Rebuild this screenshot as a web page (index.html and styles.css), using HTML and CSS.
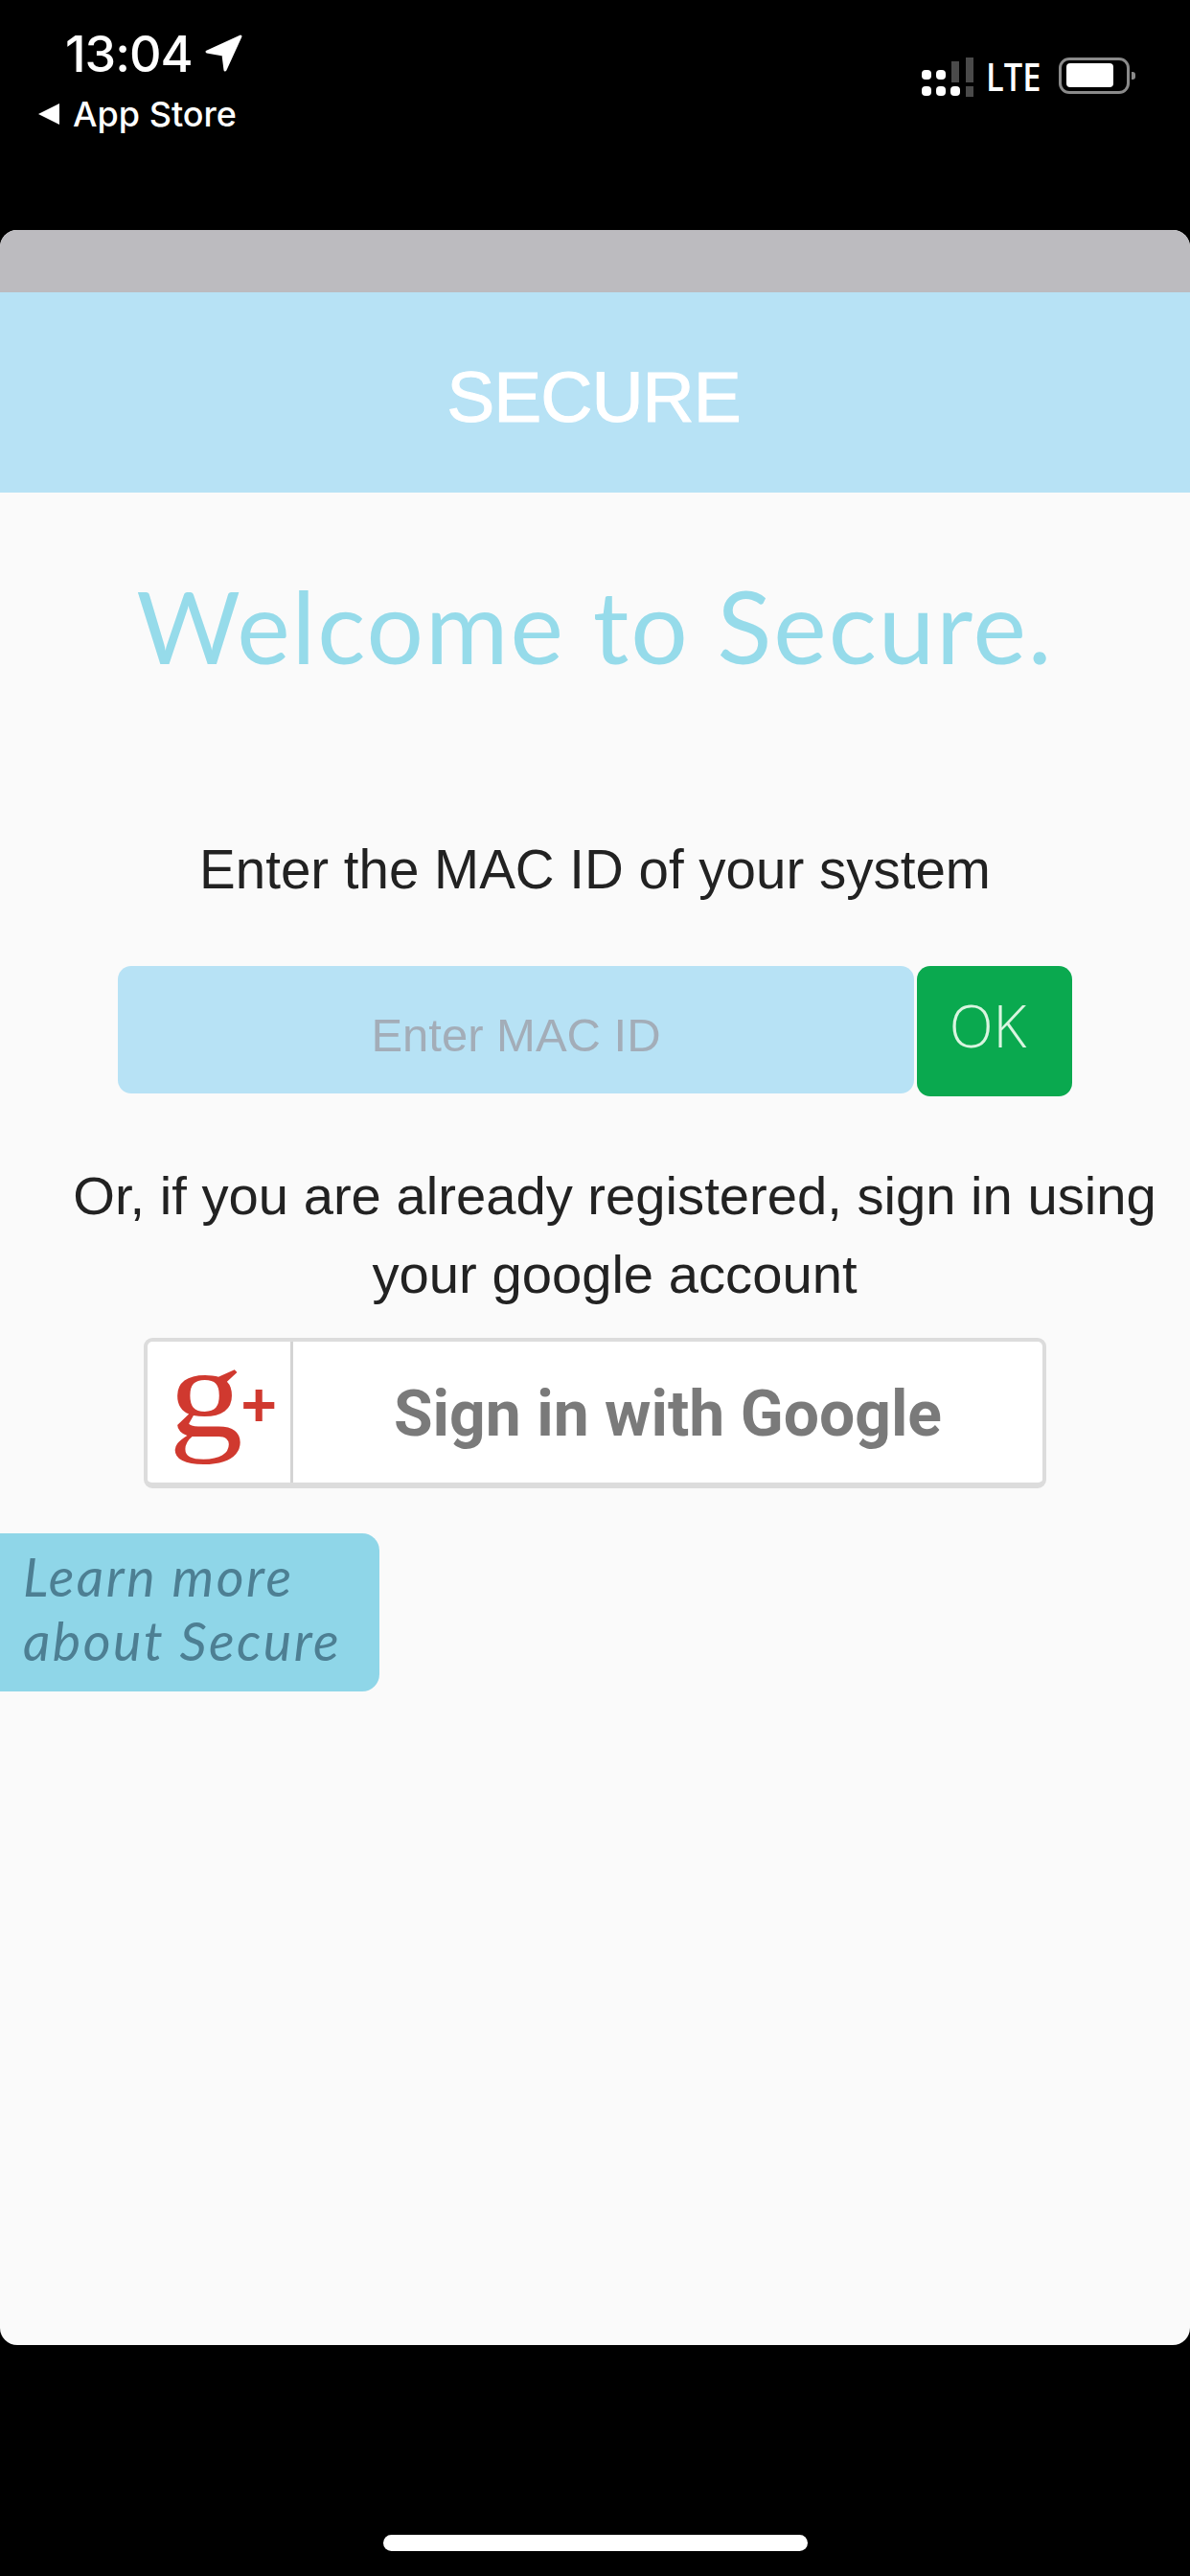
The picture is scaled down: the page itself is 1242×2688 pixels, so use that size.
FILE: index.html
```html
<!doctype html>
<html>
<head>
<meta charset="utf-8">
<title>Secure</title>
<link rel="stylesheet" href="styles.css">
</head>
<body>
<div class="phone">
	<div class="status">
		<div class="status_left">
			<div class="time_row">
				<span class="time">13:04</span>
				<svg class="arrow" width="40" height="40" viewBox="0 0 40 40"><path d="M37 2 L2 18 L19 21 L21 37 Z" fill="#fff" stroke="#fff" stroke-width="3" stroke-linejoin="round"/></svg>
			</div>
			<div class="back_row">
				<svg class="back" width="26" height="24" viewBox="0 0 26 24"><path d="M24 1 L2 12 L24 23 Z" fill="#fff"/></svg>
				<span class="back_text">App Store</span>
			</div>
		</div>
		<div class="status_right">
			<svg class="signal" width="64" height="46" viewBox="0 0 64 46">
				<rect x="2" y="13" width="10" height="10" rx="4" fill="#fff"/>
				<rect x="17" y="13" width="10" height="10" rx="4" fill="#fff"/>
				<rect x="2" y="30" width="10" height="10" rx="4" fill="#fff"/>
				<rect x="17" y="30" width="10" height="10" rx="4" fill="#fff"/>
				<rect x="32" y="30" width="10" height="10" rx="4" fill="#fff"/>
				<rect x="33" y="4" width="8" height="22" fill="#4a4a4a"/>
				<rect x="48" y="0" width="8" height="26" fill="#4a4a4a"/>
				<rect x="48" y="30" width="8" height="11" fill="#4a4a4a"/>
			</svg>
			<span class="lte">LTE</span>
			<div class="battery"><div class="battery_fill"></div></div>
			<div class="battery_nub"></div>
		</div>
	</div>

	<div class="sheet">
		<div class="grab"></div>
		<div class="header">SECURE</div>
		<div class="content">
			<h1 class="welcome">Welcome to Secure.</h1>
			<p class="label">Enter the MAC ID of your system</p>
			<div class="mac_row">
				<div class="mac_input">Enter MAC ID</div>
				<div class="ok_btn">OK</div>
			</div>
			<p class="signin_text">Or, if you are already registered, sign in using<br>your google account</p>
			<div class="google_btn">
				<div class="google_logo"><span class="g">g</span><span class="plus">+</span></div>
				<div class="google_text">Sign in with Google</div>
			</div>
			<div class="learn">Learn more<br>about Secure</div>
		</div>
	</div>

	<div class="home_wrap"><div class="home_bar"></div></div>
</div>
</body>
</html>
```
FILE: styles.css
```css
*{ margin:0; padding:0; box-sizing:border-box;}
html,body{ background:#000;}
body{ width:1242px; height:2688px; overflow:hidden; font-family:"Liberation Sans",Arial,sans-serif;}

.phone{ width:1242px; height:2688px; display:flex; flex-direction:column;}

.status{ height:240px; display:flex; justify-content:space-between; color:#fff;}
.status_left{ padding:31px 0 0 38px;}
.time_row{ display:flex; align-items:center; gap:13px; padding-left:30px; height:50px;}
.time{ font-family:Inter,"Liberation Sans",sans-serif; font-size:52px; font-weight:500; letter-spacing:-1px;}
.back_row{ display:flex; align-items:center; gap:12px; margin-top:17px; height:42px;}
.back_text{ font-family:Inter,"Liberation Sans",sans-serif; font-size:36px; font-weight:500;}

.status_right{ display:flex; align-items:flex-start; padding:60px 57px 0 0;}
.signal{ margin-right:5px;}
.lte{ font-family:"Open Sans","Liberation Sans",sans-serif; font-size:40px; font-weight:600; line-height:40px; width:76px; transform:scaleX(.86); transform-origin:left top;}
.battery{ width:74px; height:38px; border:3px solid #8a8a8a; border-radius:11px; padding:3px 14px 4px 5px;}
.battery_fill{ width:100%; height:100%; background:#fff; border-radius:4px;}
.battery_nub{ width:4px; height:8px; margin:15px 0 0 2px; background:#8a8a8a; border-radius:0 3px 3px 0;}

.sheet{ height:2207px; background:#fafafa; border-radius:18px; overflow:hidden; display:flex; flex-direction:column;}
.grab{ height:65px; background:#bcbbbf; flex:none;}
.header{ height:209px; flex:none; background:#b7e2f5; color:#fff; font-size:75px; line-height:218px; text-align:center; letter-spacing:-1px; padding-right:3px; -webkit-text-stroke:1px #fff;}

.content{ flex:1; display:flex; flex-direction:column;}
.welcome{ margin-top:81px; font-family:Lato,"Open Sans",sans-serif; font-weight:400; font-size:105px; line-height:114px; text-align:center; color:#96dbea; letter-spacing:2px;}
.label{ margin-top:167px; font-size:56.5px; line-height:64px; text-align:center; color:#222;}

.mac_row{ display:flex; margin:68px 0 0 123px; gap:3px; align-items:flex-start;}
.mac_input{ width:831px; height:133px; background:#b7e2f5; border-radius:14px; font-size:49px; line-height:144px; color:#a3adb8; text-align:center;}
.ok_btn{ width:162px; height:136px; background:#0aa94f; border-radius:14px; color:#d9f5e0; font-family:"Open Sans","Liberation Sans",sans-serif; font-weight:300; font-size:60px; line-height:124px; text-align:center; padding-right:14px;}

.signin_text{ margin-top:63px; font-size:56.2px; line-height:82px; text-align:center; color:#222; padding-left:41px;}

.google_btn{ width:942px; height:157px; margin:25px 0 0 150px; border:4px solid #dcdcdc; border-bottom-width:6px; border-radius:9px; background:#fff; display:flex; flex:none;}
.google_logo{ width:152px; border-right:3px solid #d4d4d4; display:flex; padding-left:22px; color:#d0392f;}
.g{ font-family:"Liberation Serif",serif; font-size:135px; line-height:108px; height:108px; transform:scaleX(1.15); transform-origin:left top;}
.plus{ font-family:"Liberation Sans",sans-serif; font-weight:700; font-size:64px; line-height:132px; margin-left:8px;}
.google_text{ flex:1; font-family:Roboto,"Liberation Sans",sans-serif; font-weight:700; font-size:66px; line-height:151px; color:#7a7a7a; text-align:center;}

.learn{ width:396px; height:165px; margin-top:47px; padding:11px 0 0 24px; background:#8fd6e8; border-radius:0 18px 18px 0; font-family:Lato,"Open Sans",sans-serif; font-style:italic; font-size:55.5px; line-height:67px; letter-spacing:2.5px; color:#4d7f93; white-space:nowrap;}

.home_wrap{ flex:1; display:flex; justify-content:center; padding-top:198px;}
.home_bar{ width:443px; height:17px; background:#fff; border-radius:9px;}
```
